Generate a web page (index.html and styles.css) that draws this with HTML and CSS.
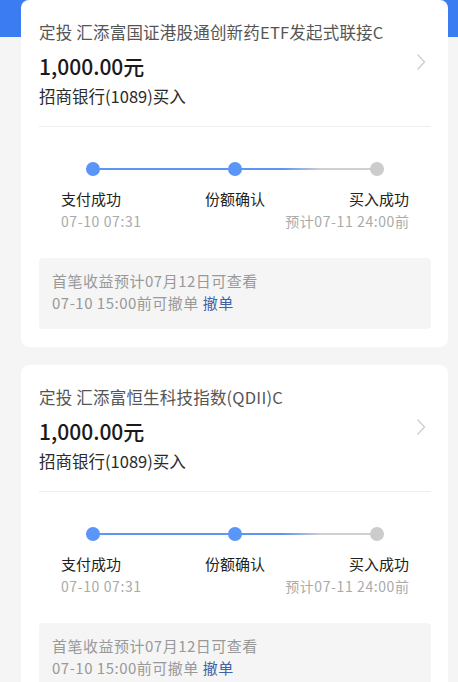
FILE: index.html
```html
<!doctype html>
<html lang="zh">
<head>
  <meta charset="UTF-8">
  <meta name="viewport" content="width=device-width, initial-scale=1.0">
  <title>定投记录</title>
  <link rel="stylesheet" href="styles.css">
</head>
<body>
<div class="list">
  <div class="card">
    <div class="head">
      <div class="info">
        <div class="title">定投 汇添富国证港股通创新药ETF发起式联接C</div>
        <div class="amount">1,000.00元</div>
        <div class="bank">招商银行(1089)买入</div>
      </div>
      <svg class="arrow" width="10" height="18" viewBox="0 0 10 18">
        <path d="M1.5 1.5 L8.5 9 L1.5 16.5" fill="none" stroke="#cfcfcf" stroke-width="1.4"/>
      </svg>
    </div>
    <div class="line"></div>
    <div class="track">
      <span class="dot on"></span>
      <span class="dot on"></span>
      <span class="dot"></span>
    </div>
    <div class="steps">
      <div class="step">
        <div class="name">支付成功</div>
        <div class="time">07-10 07:31</div>
      </div>
      <div class="step mid">
        <div class="name">份额确认</div>
        <div class="time"></div>
      </div>
      <div class="step end">
        <div class="name">买入成功</div>
        <div class="time">预计07-11 24:00前</div>
      </div>
    </div>
    <div class="tip">
      <p>首笔收益预计07月12日可查看</p>
      <p>07-10 15:00前可撤单 <a href="#">撤单</a></p>
    </div>
  </div>

  <div class="card">
    <div class="head">
      <div class="info">
        <div class="title">定投 汇添富恒生科技指数(QDII)C</div>
        <div class="amount">1,000.00元</div>
        <div class="bank">招商银行(1089)买入</div>
      </div>
      <svg class="arrow" width="10" height="18" viewBox="0 0 10 18">
        <path d="M1.5 1.5 L8.5 9 L1.5 16.5" fill="none" stroke="#cfcfcf" stroke-width="1.4"/>
      </svg>
    </div>
    <div class="line"></div>
    <div class="track">
      <span class="dot on"></span>
      <span class="dot on"></span>
      <span class="dot"></span>
    </div>
    <div class="steps">
      <div class="step">
        <div class="name">支付成功</div>
        <div class="time">07-10 07:31</div>
      </div>
      <div class="step mid">
        <div class="name">份额确认</div>
        <div class="time"></div>
      </div>
      <div class="step end">
        <div class="name">买入成功</div>
        <div class="time">预计07-11 24:00前</div>
      </div>
    </div>
    <div class="tip">
      <p>首笔收益预计07月12日可查看</p>
      <p>07-10 15:00前可撤单 <a href="#">撤单</a></p>
    </div>
  </div>
</div>
</body>
</html>
```

FILE: styles.css
```css
* {
  margin: 0;
  padding: 0;
  box-sizing: border-box;
}

body {
  font-family: "Noto Sans CJK SC", "Noto Sans", sans-serif;
  background: linear-gradient(#3b7cf3 0, #3b7cf3 37px, #f5f5f5 37px);
  background-repeat: no-repeat;
  background-color: #f5f5f5;
  min-height: 682px;
}

.list {
  display: flex;
  flex-direction: column;
  gap: 18px;
  padding-left: 21px;
  width: 448px;
}

.card {
  background: #fff;
  border-radius: 8px;
  padding: 20px 17px 18px 18px;
}

.head {
  display: flex;
  align-items: center;
}

.info {
  flex: 1;
}

.title {
  font-size: 16.5px;
  line-height: 24px;
  color: #555;
  letter-spacing: 0.2px;
}

.amount {
  margin-top: 7px;
  font-size: 21px;
  line-height: 30px;
  font-weight: 500;
  color: #1a1a1a;
}

.bank {
  margin-top: 3px;
  font-size: 16.5px;
  line-height: 24px;
  color: #2a2a2a;
}

.arrow {
  margin-right: 5px;
  margin-top: -4px;
}

.line {
  margin-top: 18px;
  height: 1px;
  background: #eeeeee;
}

.track {
  margin: 35px 47px 0 47px;
  height: 14px;
  display: flex;
  justify-content: space-between;
  background: linear-gradient(90deg, #5b95f5 0, #5b95f5 66%, #d0d0d0 79%, #d0d0d0 100%);
  background-size: 100% 2px;
  background-position: center;
  background-repeat: no-repeat;
}

.dot {
  width: 14px;
  height: 14px;
  border-radius: 50%;
  background: #cccccc;
}

.dot.on {
  background: #5a96f7;
}

.steps {
  margin: 13px 22px 0 22px;
  display: grid;
  grid-template-columns: 1fr auto 1fr;
  white-space: nowrap;
}

.step.mid {
  text-align: center;
}

.step.end {
  text-align: right;
}

.name {
  font-size: 15px;
  line-height: 20px;
  color: #222;
}

.time {
  margin-top: 2px;
  height: 20px;
  font-size: 14px;
  line-height: 20px;
  color: #aaaaaa;
  letter-spacing: 0.6px;
}

.step.end .time {
  margin-right: -0.6px;
}

.tip {
  margin-top: 27px;
  background: #f5f5f5;
  border-radius: 4px;
  padding: 12px 13px 15px;
}

.tip p {
  font-size: 15px;
  line-height: 22px;
  color: #999;
  letter-spacing: 0.5px;
}

.tip a {
  color: #3f62a8;
  text-decoration: none;
}
```
